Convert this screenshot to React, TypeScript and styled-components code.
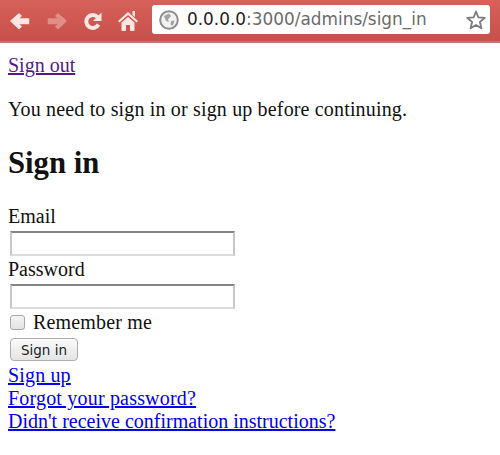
import { createGlobalStyle } from "styled-components";
import styled from "styled-components";

const GlobalStyle = createGlobalStyle`
  html, body {
    margin: 0;
    padding: 0;
    background: #fff;
  }
  body {
    font-family: "Liberation Serif", "Times New Roman", serif;
    font-size: 20px;
    line-height: 23px;
    color: #111;
  }
`;

const Page = styled.div`
  width: 500px;
  height: 455px;
  overflow: hidden;
`;

const Toolbar = styled.div`
  height: 43px;
  box-sizing: border-box;
  display: flex;
  align-items: flex-start;
  padding: 5px 0 0 10px;
  background: linear-gradient(#d6615a, #c7504a);
  border-bottom: 2px solid #ad7d76;
`;

const NavIcon = styled.svg<{ $gap?: number; $top?: number }>`
  width: 20px;
  height: 21px;
  margin-top: ${(props) => props.$top ?? 7}px;
  margin-left: ${(props) => props.$gap ?? 0}px;
  flex-shrink: 0;
`;

const Omnibox = styled.div`
  width: 338px;
  height: 29px;
  margin-left: 14px;
  box-sizing: border-box;
  display: flex;
  align-items: center;
  padding: 0 4px 0 7px;
  background: #fff;
  border-radius: 3px;
  font-family: "DejaVu Sans", sans-serif;
  font-size: 16.9px;
`;

const Host = styled.span`
  color: #222;
  margin-left: 8px;
`;

const UrlPath = styled.span`
  color: #6b6b6b;
  flex: 1;
`;

const Content = styled.main`
  padding: 11px 8px 0;
`;

const TextLink = styled.a<{ $visited?: boolean; $spacing?: number }>`
  display: block;
  width: fit-content;
  color: ${(props) => (props.$visited ? "#551a8b" : "#0000ee")};
  text-decoration: underline;
  letter-spacing: ${(props) => props.$spacing ?? 0}px;
`;

const Notice = styled.p`
  margin: 21px 0 0;
  letter-spacing: 0.16px;
`;

const Title = styled.h2`
  margin: 25px 0 0;
  font-size: 30.7px;
  line-height: 35px;
  font-weight: bold;
  color: #111;
`;

const Form = styled.form`
  margin-top: 24px;
`;

const Field = styled.div<{ $height: number }>`
  height: ${(props) => props.$height}px;
`;

const Label = styled.label`
  display: block;
`;

const TextInput = styled.input`
  display: block;
  width: 225px;
  height: 25px;
  margin: 3px 0 0 2px;
  padding: 0;
  box-sizing: border-box;
  background: #fff;
  border: 2px solid #dcdcdc;
  border-top-color: #858585;
  border-left-color: #c8c8c8;
  border-right-color: #c8c8c8;
  outline: none;
`;

const RememberRow = styled.div`
  display: flex;
  align-items: center;
  height: 23px;
  margin-top: 1px;
  padding-left: 2px;
`;

const Checkbox = styled.span`
  width: 15px;
  height: 15px;
  box-sizing: border-box;
  border: 1px solid #a8a8a8;
  border-radius: 3px;
  background: linear-gradient(#f4f4f4, #e2e2e2);
`;

const RememberText = styled.span`
  margin-left: 8px;
  letter-spacing: 0.18px;
`;

const SubmitButton = styled.button`
  display: block;
  width: 68px;
  height: 23px;
  margin: 4px 0 0 2px;
  padding: 0;
  border: 1px solid #adadad;
  border-radius: 4px;
  background: linear-gradient(#fbfbfb, #e4e4e4);
  font-family: "DejaVu Sans", sans-serif;
  font-size: 13.5px;
  color: #222;
`;

const Links = styled.div`
  margin-top: 3px;
`;

export default function App() {
  return (
    <Page>
      <GlobalStyle />
      <Toolbar>
        <NavIcon viewBox="0 0 20 21">
          <path d="M1 9 L9 2 L11 4 L7.5 7 H18.5 V11.5 H7.5 L11 14.5 L9 16.5 Z" fill="#fbe6e3" stroke="#fbe6e3" strokeWidth="1.5" strokeLinejoin="round" />
        </NavIcon>
        <NavIcon $gap={17} viewBox="0 0 20 21">
          <path d="M19 9 L11 2 L9 4 L12.5 7 H1.5 V11.5 H12.5 L9 14.5 L11 16.5 Z" fill="#e08f88" stroke="#e08f88" strokeWidth="1.5" strokeLinejoin="round" />
        </NavIcon>
        <NavIcon $gap={16} viewBox="0 0 20 21">
          <path d="M15.5 12.5 A6.5 6.5 0 1 1 14.5 5" fill="none" stroke="#fbe6e3" strokeWidth="4" />
          <path d="M18.5 0.5 V9 H10 Z" fill="#fbe6e3" />
        </NavIcon>
        <NavIcon $gap={15} $top={5} viewBox="0 0 20 21">
          <path d="M10 2 L20 11 L18.6 12.6 L10 5 L1.4 12.6 L0 11 Z M14.5 1 H17 V7 L14.5 5 Z M3.5 12.5 L10 7 L16.5 12.5 V21 H12 V15 H8 V21 H3.5 Z" fill="#fbe6e3" />
        </NavIcon>
        <Omnibox>
          <svg width="20" height="20" viewBox="0 0 20 20">
            <circle cx="10" cy="10" r="8.8" fill="#f2f2f2" stroke="#8f8f8f" strokeWidth="2" />
            <path d="M5 6 L10 3.5 L12 6 L9 9.5 L10 12 L7 11 Z M12 11 L15.5 10.5 L14 15.5 L11.5 15 Z" fill="#a3a3a3" />
          </svg>
          <Host>0.0.0.0</Host>
          <UrlPath>:3000/admins/sign_in</UrlPath>
          <svg width="20" height="20" viewBox="0 0 20 20">
            <path d="M10 1.5 L12.4 7.4 L18.8 7.9 L13.9 12 L15.4 18.3 L10 14.9 L4.6 18.3 L6.1 12 L1.2 7.9 L7.6 7.4 Z" fill="#fff" stroke="#7c7c7c" strokeWidth="1.8" strokeLinejoin="round" />
          </svg>
        </Omnibox>
      </Toolbar>
      <Content>
        <TextLink $visited href="#">Sign out</TextLink>
        <Notice>You need to sign in or sign up before continuing.</Notice>
        <Title>Sign in</Title>
        <Form>
          <Field $height={53}>
            <Label>Email</Label>
            <TextInput type="text" />
          </Field>
          <Field $height={52}>
            <Label>Password</Label>
            <TextInput type="password" />
          </Field>
          <RememberRow>
            <Checkbox />
            <RememberText>Remember me</RememberText>
          </RememberRow>
          <SubmitButton type="button">Sign in</SubmitButton>
        </Form>
        <Links>
          <TextLink $spacing={0.15} href="#">Sign up</TextLink>
          <TextLink $spacing={0.19} href="#">Forgot your password?</TextLink>
          <TextLink href="#">Didn't receive confirmation instructions?</TextLink>
        </Links>
      </Content>
    </Page>
  );
}
